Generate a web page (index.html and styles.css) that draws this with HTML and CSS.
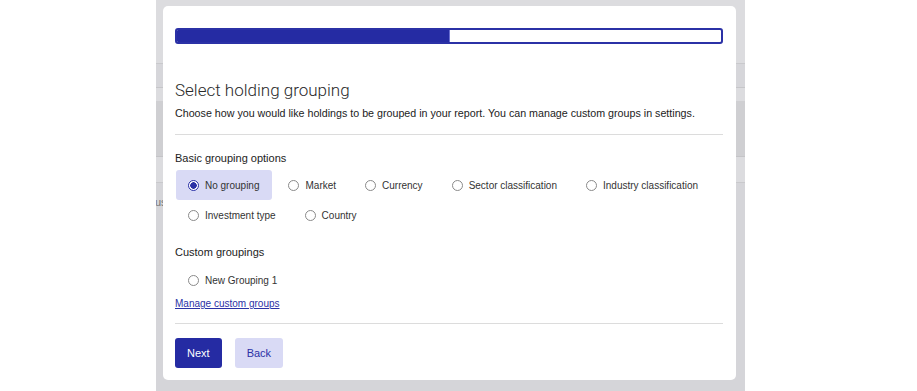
FILE: index.html
```html
<!DOCTYPE html>
<html lang="en">
<head>
<meta charset="utf-8">
<title>Select holding grouping</title>
<link rel="stylesheet" href="styles.css">
</head>
<body>
<div class="backdrop">
  <div class="bg-row r0"></div>
  <div class="bg-row r1"></div>
  <div class="bg-row r2"></div>
  <div class="bg-row r3"></div>
  <div class="bg-row r4"></div>
  <div class="bg-row r5"><span class="bg-text">us</span></div>

  <div class="modal">
    <div class="progress"><div class="progress-fill" style="width:50%"></div></div>

    <h1 class="title">Select holding grouping</h1>
    <p class="desc">Choose how you would like holdings to be grouped in your report. You can manage custom groups in settings.</p>
    <hr class="sep">

    <div class="section-title">Basic grouping options</div>
    <div class="options">
      <label class="opt selected"><input type="radio" name="g" checked><span>No grouping</span></label>
      <label class="opt"><input type="radio" name="g"><span>Market</span></label>
      <label class="opt"><input type="radio" name="g"><span>Currency</span></label>
      <label class="opt"><input type="radio" name="g"><span>Sector classification</span></label>
      <label class="opt"><input type="radio" name="g"><span>Industry classification</span></label>
      <label class="opt"><input type="radio" name="g"><span>Investment type</span></label>
      <label class="opt"><input type="radio" name="g"><span>Country</span></label>
    </div>

    <div class="section-title custom">Custom groupings</div>
    <div class="options custom-opts">
      <label class="opt"><input type="radio" name="g"><span>New Grouping 1</span></label>
    </div>
    <a class="link" href="#">Manage custom groups</a>
    <hr class="sep sep2">

    <div class="actions">
      <button class="btn primary">Next</button>
      <button class="btn secondary">Back</button>
    </div>
  </div>
</div>
</body>
</html>
```

FILE: styles.css
```css
html, body {
  margin: 0;
  padding: 0;
  background: #ffffff;
  font-family: "Liberation Sans", Arial, Helvetica, sans-serif;
  color: #333;
}
.backdrop {
  position: relative;
  margin-left: 156px;
  width: 589px;
  height: 391px;
  overflow: hidden;
  background: #d5d5d9;
  display: flex;
  flex-direction: column;
}
.bg-row { flex: none; }
.r0 { height: 63px; background: #dcdcdf; border-bottom: 1px solid #c9c9cc; }
.r1 { height: 23px; background: #d6d6da; border-bottom: 1px solid #c6c6c9; }
.r2 { height: 13px; background: #dcdcdf; }
.r3 { height: 55px; background: #cfcfd2; border-bottom: 1px solid #c4c4c7; }
.r4 { height: 25px; background: #dcdcdf; border-bottom: 1px solid #c9c9cc; }
.r5 { height: 40px; background: #d5d5d9; padding-top: 13px; }
.bg-text { font-size: 11px; color: #777; display: block; margin-left: -1px; }

.modal {
  position: absolute;
  left: 7px;
  top: 6px;
  width: 573px;
  height: 374px;
  box-sizing: border-box;
  background: #fff;
  border-radius: 5px;
  padding: 22px 13px 12px 12px;
  display: flex;
  flex-direction: column;
}
.progress {
  height: 18px;
  box-sizing: border-box;
  border: 2px solid #2b31a6;
  border-radius: 3px;
  background: #fff;
  overflow: hidden;
  display: flex;
}
.progress-fill {
  background: #252ba3;
  border-right: 1px solid #6a6fd0;
}
.title {
  margin: 35px 0 0 0;
  font-family: Roboto, "Liberation Sans", Arial, sans-serif;
  font-size: 17px;
  line-height: 22px;
  font-weight: 300;
  color: #2a2a2a;
}
.desc {
  margin: 5px 0 0 0;
  font-size: 10.7px;
  line-height: 14px;
  color: #222;
}
.sep {
  margin: 14px 0 0 0;
  border: 0;
  border-top: 1px solid #dcdcdc;
  height: 0;
}
.section-title {
  margin-top: 16px;
  font-size: 11px;
  line-height: 14px;
  color: #222;
}
.section-title.custom { margin-top: 15px; }
.options {
  margin-top: 5px;
  display: flex;
  flex-wrap: wrap;
  column-gap: 4px;
  padding-left: 1px;
}
.custom-opts { margin-top: 6px; }
.opt {
  display: flex;
  align-items: center;
  height: 30px;
  box-sizing: border-box;
  padding: 0 13px 0 12px;
  border-radius: 3px;
  font-size: 10px;
  color: #333;
  cursor: pointer;
}
.opt.selected { background: #d9daf5; }
.opt input {
  appearance: none;
  -webkit-appearance: none;
  margin: 0 6px 0 0;
  width: 11px;
  height: 11px;
  border: 1px solid #8a8a8a;
  border-radius: 50%;
  background: #fff;
  box-sizing: border-box;
  flex: none;
}
.opt input:checked {
  border: 1px solid #2b31a6;
  background: radial-gradient(circle, #2b31a6 0 3px, #fff 3.5px);
}
.link {
  margin-top: 2px;
  font-size: 10px;
  line-height: 14px;
  color: #2b31a6;
  text-decoration: underline;
  align-self: flex-start;
}
.sep2 { margin-top: 12px; }
.actions {
  margin-top: 14px;
  display: flex;
  gap: 13px;
}
.btn {
  height: 30px;
  border: 0;
  border-radius: 3px;
  font-family: inherit;
  font-size: 11px;
  padding: 0 12px;
  cursor: pointer;
}
.btn.primary { background: #252ba3; color: #fff; }
.btn.secondary { background: #d9daf5; color: #2b31a6; }
```
